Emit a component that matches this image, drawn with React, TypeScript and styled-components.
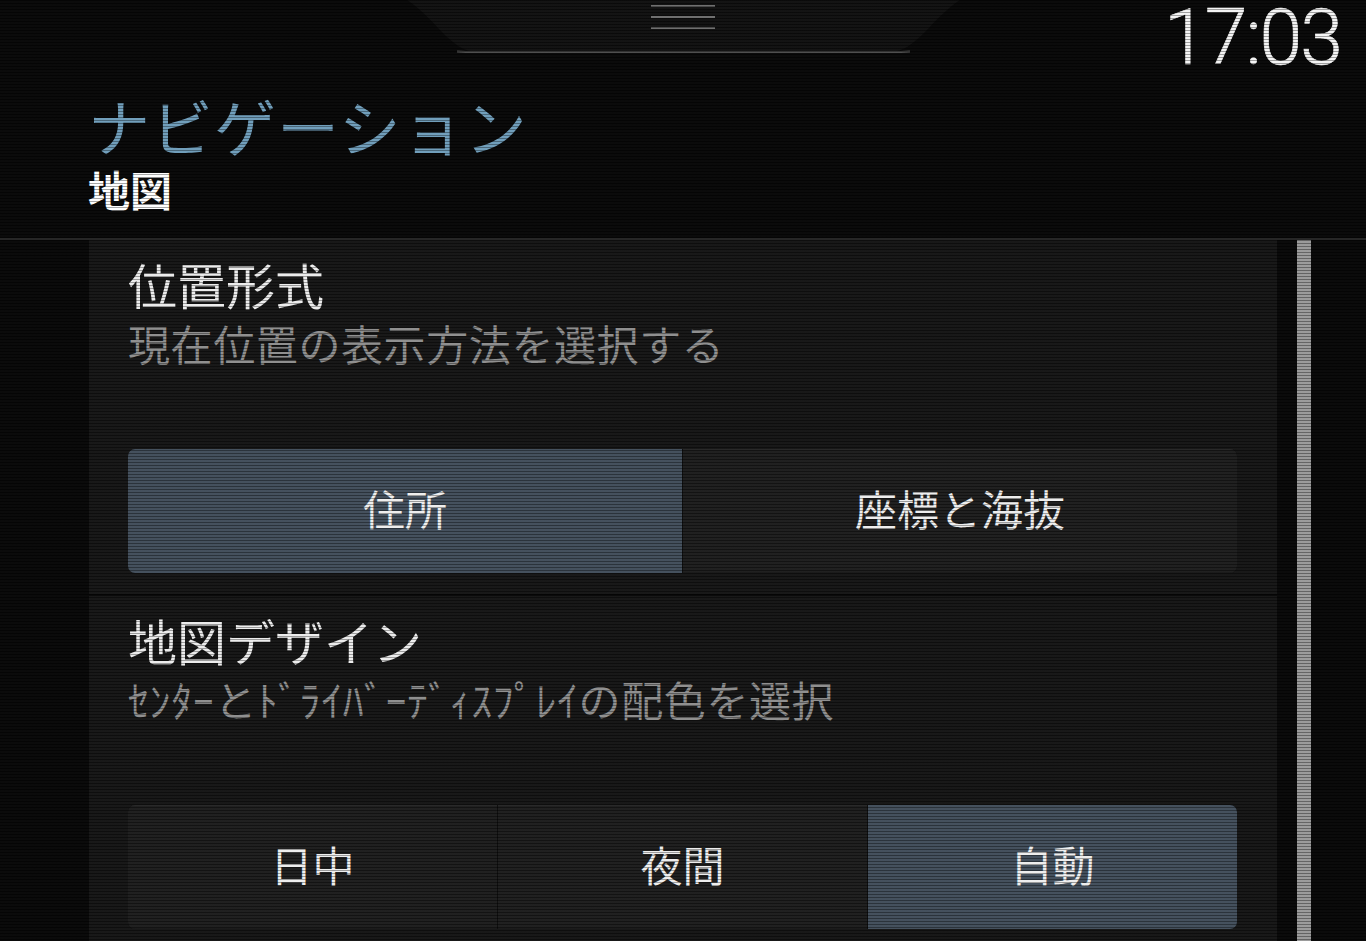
import React, { useState } from "react"
import styled, { createGlobalStyle } from "styled-components"

const GlobalStyle = createGlobalStyle`
  html, body {
    margin: 0;
    padding: 0;
    background: #070707;
    overflow: hidden;
  }
  body {
    font-family: "Noto Sans CJK JP", "Noto Sans", sans-serif;
    color: #e6e6e6;
  }
`

const App = () => {
  const [position, setPosition] = useState("address")
  const [design, setDesign] = useState("auto")

  return (
    <Screen>
      <GlobalStyle />
      <TopBar>
        <span />
        <PullTab>
          <TabShape width="553" height="54" viewBox="0 0 553 54">
            <path d="M0 0 C 28 18 44 52 70 52 L 483 52 C 509 52 525 18 553 0 Z" fill="#101010" />
            <path d="M50 51.5 C 58 52 64 52 70 52 L 483 52 C 489 52 495 52 503 51.5" stroke="#4c4c4c" strokeWidth="2" fill="none" />
          </TabShape>
          <Grip>
            <GripLine />
            <GripLine />
            <GripLine />
          </Grip>
        </PullTab>
        <Clock>17:03</Clock>
      </TopBar>

      <Header>
        <AppTitle>ナビゲーション</AppTitle>
        <PageTitle>地図</PageTitle>
      </Header>

      <Body>
        <Panel>
          <Section>
            <SettingTitle>位置形式</SettingTitle>
            <SettingHint>現在位置の表示方法を選択する</SettingHint>
            <Segments $count={2}>
              <Segment $active={position === "address"} onClick={() => setPosition("address")}>住所</Segment>
              <Segment $active={position === "coords"} onClick={() => setPosition("coords")}>座標と海抜</Segment>
            </Segments>
          </Section>
          <Section>
            <SettingTitle>地図デザイン</SettingTitle>
            <SettingHint>ｾﾝﾀｰとﾄﾞﾗｲﾊﾞｰﾃﾞｨｽﾌﾟﾚｲの配色を選択</SettingHint>
            <Segments $count={3}>
              <Segment $active={design === "day"} onClick={() => setDesign("day")}>日中</Segment>
              <Segment $active={design === "night"} onClick={() => setDesign("night")}>夜間</Segment>
              <Segment $active={design === "auto"} onClick={() => setDesign("auto")}>自動</Segment>
            </Segments>
          </Section>
        </Panel>
        <ScrollTrack>
          <ScrollThumb />
        </ScrollTrack>
      </Body>
      <ScanLines />
    </Screen>
  )
}

const Screen = styled.div`
  position: relative;
  width: 1366px;
  height: 941px;
  overflow: hidden;
  display: flex;
  flex-direction: column;
  background: #070707;
`

// the display has faint horizontal scan lines over everything
const ScanLines = styled.div`
  position: absolute;
  inset: 0;
  pointer-events: none;
  background: repeating-linear-gradient(
    to bottom,
    rgba(0, 0, 0, 0.35) 0px,
    rgba(0, 0, 0, 0.35) 1px,
    rgba(255, 255, 255, 0.015) 1px,
    rgba(255, 255, 255, 0.015) 3px
  );
`

const TopBar = styled.div`
  flex-shrink: 0;
  height: 80px;
  display: grid;
  grid-template-columns: 1fr auto 1fr;
  align-items: start;
`

const PullTab = styled.div`
  position: relative;
  width: 553px;
  height: 54px;
  display: flex;
  justify-content: center;
`

const TabShape = styled.svg`
  position: absolute;
  inset: 0;
`

const Grip = styled.div`
  position: relative;
  display: flex;
  flex-direction: column;
  gap: 9px;
  padding-top: 5px;
`

const GripLine = styled.div`
  width: 64px;
  height: 2px;
  background: #6e6e6e;
`

const Clock = styled.div`
  justify-self: end;
  padding-right: 25px;
  font-family: Roboto, "Liberation Sans", sans-serif;
  font-weight: 300;
  font-size: 77px;
  line-height: 76px;
  letter-spacing: -2px;
  color: #f4f4f4;
  -webkit-text-stroke: 0.6px #f4f4f4;
`

const Header = styled.div`
  flex-shrink: 0;
  height: 160px;
  box-sizing: border-box;
  padding-left: 88px;
  padding-top: 6px;
  border-bottom: 2px solid #232323;
`

const AppTitle = styled.div`
  font-size: 62px;
  font-weight: 400;
  line-height: 78px;
  letter-spacing: 1px;
  color: #6f9dba;
`

const PageTitle = styled.div`
  font-size: 42px;
  font-weight: 700;
  line-height: 50px;
  color: #ffffff;
`

const Body = styled.div`
  flex: 1;
  min-height: 0;
  display: flex;
  gap: 20px;
  padding-left: 89px;
`

const Panel = styled.div`
  width: 1188px;
  background: #151515;
  display: flex;
  flex-direction: column;
  overflow: hidden;
`

const Section = styled.div`
  flex-shrink: 0;
  padding: 14px 40px 21px 39px;
  & + & {
    border-top: 2px solid #070707;
  }
`

const SettingTitle = styled.div`
  font-size: 49px;
  line-height: 60px;
  color: #ececec;
`

const SettingHint = styled.div`
  font-size: 42px;
  line-height: 58px;
  letter-spacing: 0.6px;
  color: #8e8e8e;
`

const Segments = styled.div<{ $count: number }>`
  margin-top: 77px;
  height: 124px;
  display: grid;
  grid-template-columns: repeat(${(p) => p.$count}, 1fr);
  gap: 1px;
  border-radius: 7px;
  overflow: hidden;
  background: #0c0c0c;
`

const Segment = styled.button<{ $active: boolean }>`
  border: none;
  padding: 0 0 8px;
  margin: 0;
  font-family: "Noto Sans CJK JP", sans-serif;
  font-size: 42px;
  color: #eeeeee;
  background: ${(p) => (p.$active ? "#424e5b" : "#1d1d1d")};
  box-shadow: ${(p) => (p.$active ? "none" : "inset 0 1px 0 #262626, inset 0 -1px 0 #181818")};
  cursor: pointer;
`

const ScrollTrack = styled.div`
  width: 14px;
`

const ScrollThumb = styled.div`
  height: 100%;
  background: #9a9a9a;
`

export default App
